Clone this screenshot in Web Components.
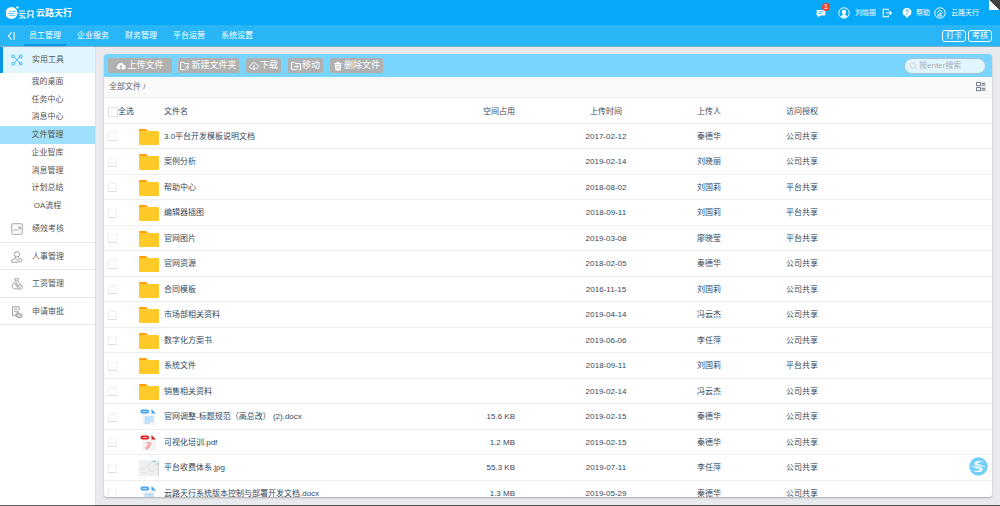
<!DOCTYPE html>
<html lang="zh-CN">
<head>
<meta charset="utf-8">
<title>文件管理</title>
<style>
html,body{margin:0;height:100%}
body{font:8px/12px "Liberation Sans","Noto Sans CJK SC",sans-serif;color:#34495e;background:#e9eaee;overflow:hidden}
</style>
</head>
<body>
<cloud-app></cloud-app>
<script>
const ICONS = {
  chat:'<path d="M2 3h12a1 1 0 0 1 1 1v7a1 1 0 0 1-1 1H7l-4 3v-3H2a1 1 0 0 1-1-1V4a1 1 0 0 1 1-1z" fill="currentColor" stroke="none"/><path d="M4 6h8M4 9h5" stroke="#05a9f7"/>',
  user:'<circle cx="8" cy="8" r="7"/><path d="M8 3.500c4 0 3 5 1.500 6v1l3 1.500c-2 3-7 3-9 0l3-1.500v-1C5 8.500 4 3.500 8 3.500z" fill="currentColor" stroke="none"/>',
  exit:'<path d="M10 4V2H2v12h8v-2M6 8h9M12 5l3 3-3 3" stroke-width="1.800"/>',
  help:'<path d="M8 0a6.500 6.500 0 0 1 3 12.500L8 16l-3-3.500A6.500 6.500 0 0 1 8 0z" fill="currentColor" stroke="none"/><path d="M6 5C6 2.500 10 2.500 10 5 10 6.500 8 6.500 8 8.500M8 9.500v1.500" stroke="#05a9f7" stroke-width="1.500"/>',
  corp:'<circle cx="8" cy="8" r="7"/><path d="M4 7.500L8 4l4 3.500M8 7v5M5.500 9v3M8 9h2.500M4.500 12h7"/>',
  fold:'<path d="M9 2L4 8l5 6M13 2v12" stroke-width="1.800"/>',
  tools:'<path d="M4 4l9 9M12 3L4 12"/><circle cx="13" cy="13" r="1.800"/><circle cx="3" cy="13" r="1.800"/><path d="M1 2l2-1 2 2-2 2-2-1zM11 2c0 3 1 4 4 3l-1-1 1-2-2-1z"/>',
  chart:'<rect x="1" y="1" width="14" height="14" rx="1"/><path d="M3 11l3-3 2 2 4-4M9 5.500h3.500V9"/>',
  person:'<circle cx="8" cy="4.500" r="3.500"/><path d="M6 8v2l-5 2v3h9M10 8v1.500M8 10v3"/><circle cx="12.500" cy="12.500" r="2.200"/>',
  money:'<path d="M5 1h5L9 4H6zM6 4C1 8 0 14.500 5 14.500h5M9 4c2 1 3 3 3.500 4M9 7H6v2h3v2H6"/><circle cx="12" cy="12" r="3"/><path d="M11 12h2"/>',
  approve:'<path d="M7 13H2V1h9v5M4 4h5M4 7h3"/><path d="M8 15l-2-4 2 .5V7h1.500v3l5 1v3l-1 1.500z" fill="currentColor" fill-opacity=".4"/>',
  upload:'<path d="M4 13C-1 12 1 7 3 7c1-6 9-5 9-1 5 1 4 7 1 7H9V9h2L8 6 5 9h2v4z" fill="currentColor" stroke="none"/>',
  newdir:'<path d="M9 14H1V2h5l1 2h7v3M9 10h6M12 7v7" stroke-width="1.500"/>',
  down:'<path d="M5 12C0 13 0 7 3 7c1-6 9-5 9-1 5 1 4 6-1 6M8 6v8M6 11l2 3 2-3" stroke-width="1.500"/>',
  move:'<path d="M9 14H1V2h5l1 2h8v10h-3M5 9h6M9 6l3 3-3 3" stroke-width="1.500"/>',
  trash:'<path d="M2 3h4V1h4v2h4v2H2zM3 6h10l-1 9H4z" fill="currentColor" stroke="none"/><path d="M6.500 8v5M9.500 8v5" stroke="#b0b0b0"/>',
  search:'<circle cx="7" cy="7" r="5.500"/><path d="M11 11l4 4"/>',
  list:'<rect x="1" y="1" width="6" height="5"/><rect x="1" y="9" width="6" height="5"/><path d="M9 2h6M9 5h6M9 10h6M9 13h6" stroke-width="1.500"/>',
  swirl:'<circle cx="16" cy="16" r="15.500" fill="#76cffb" stroke="none"/><path d="M25 9C17 4 8 8 9 12c1 3 12 2 15 3-5-4-11-2-10-4 2-3 7-3 11-2zM7 23c8 5 17 1 16-3-1-3-12-2-15-3 5 4 11 2 10 4-2 3-7 3-11 2z" fill="#fff" stroke="none"/><path d="M5 16h22" stroke="#fff"/>',
  folder:'<path d="M0 2q0-2 2-2h12l3 3v5H0z" fill="#ffa000" stroke="none"/><rect y="4" width="40" height="28" rx="2" fill="#ffca28" stroke="none"/>',
  doc:'<path d="M5 2h18l9 8v22H5z" fill="#f4f5f6" stroke="none"/><path d="M23 0l9 9h-9z" fill="#42a5f5" stroke="none"/><rect x="1" y="1" width="17" height="8" rx="4" fill="#42a5f5" stroke="none"/><path d="M5 5h9" stroke="#bbdefb" stroke-width="2"/><path d="M9 16h18M9 20h18M9 24h18M9 28h11" stroke="#90caf9" stroke-width="2"/>',
  pdf:'<path d="M5 2h18l9 8v22H5z" fill="#f4f4f4" stroke="none"/><path d="M23 0l9 9h-9z" fill="#e31b23" stroke="none"/><rect x="1" y="1" width="17" height="8" rx="4" fill="#e31b23" stroke="none"/><path d="M5 5h9" stroke="#ffb0b0" stroke-width="2"/><path d="M13 17c5-5 11-1 8 3-2 3-5 2-8 4-3 3 2 6 4 2l1-9" stroke="#ec5a60" stroke-width="1.500"/>',
  pic:'<path d="M0 0h40v32H0z" fill="#eef0ef" stroke="none"/><path d="M4 19l9-3 6-6 8-5M18 11l3 9 8 4M6 25h8" stroke="#cbd3d1"/><path d="M27 3h6M33 8h5" stroke="#69c8cf" stroke-width="2"/><path d="M39 3v29" stroke="#bbb"/>'
};
const VIEW_BOXES = {folder:'0 0 40 32',doc:'0 0 36 32',pdf:'0 0 36 32',pic:'0 0 40 32',swirl:'0 0 32 32'};
class UiIcon extends HTMLElement{
  connectedCallback(){
    if(this.shadowRoot) return;
    const n=this.getAttribute('name');
    this.attachShadow({mode:'open'}).innerHTML=`<style>:host{display:block;flex:none;width:10px;height:10px}svg{display:block;width:100%;height:100%;fill:none;stroke:currentColor;stroke-width:1.200}</style><svg viewBox="${VIEW_BOXES[n]||'0 0 16 16'}" aria-hidden="true">${ICONS[n]}</svg>`;
  }
}
customElements.define('ui-icon',UiIcon);

function define(name,html){
  const t=document.createElement('template');t.innerHTML=html;
  customElements.define(name,class extends HTMLElement{
    constructor(){super();this.attachShadow({mode:'open'}).append(t.content.cloneNode(true));}
  });
}

define('brand-logo',`<style>
:host{display:flex;align-items:center;color:#fff;font-size:9px;font-weight:bold}
svg{width:30px;height:14px;display:block}
</style><svg viewBox="0 0 30 14" aria-hidden="true"><circle cx="5.500" cy="7" r="6" fill="#fff"/><path d="M3 5.500h6.500M1.500 7.500h7M3 9.500h6.500" stroke="#53c3fa" stroke-width=".9"/><path d="M11.500 0v3M10 1.500h3" stroke="#fff" stroke-width=".8"/><path d="M13 5h6M12.500 7.500h7M13 12h3V9.500h-2.500M18 9.500V12h2M22 5h5v4h-5zM23 10l-2 2M26 10l2 2" stroke="#fff" stroke-width="1.200" fill="none"/></svg><span>云路天行</span>`);

define('top-bar',`<style>
:host{display:flex;justify-content:space-between;align-items:center;height:25px;padding:0 21px 0 6px;background:#05a9f7;color:#fff;font-size:7px;position:relative}
nav{display:flex;align-items:center}
a{display:flex;align-items:center;color:inherit;text-decoration:none;gap:5px;position:relative}
.round{width:12px;height:12px}
.msg{margin-right:12px}.out{margin:0 10px 0 6px}.help{margin-right:4px;gap:4px}
b{position:absolute;left:6px;top:-5px;width:8px;height:8px;border-radius:4px;background:#f44336;font:7px/8px "Liberation Sans",sans-serif;text-align:center}
.corner{position:absolute;right:0;top:0;width:11px;height:10px;background:linear-gradient(to top right,#fff 50%,#424242 50%)}
</style><brand-logo></brand-logo><nav>
<a class="msg" href="#" aria-label="消息"><ui-icon name="chat"></ui-icon><b>1</b></a>
<a href="#"><ui-icon class="round" name="user"></ui-icon>刘晓丽</a>
<a class="out" href="#" aria-label="退出"><ui-icon name="exit"></ui-icon></a>
<a class="help" href="#"><ui-icon name="help"></ui-icon>帮助</a>
<a href="#"><ui-icon class="round" name="corp"></ui-icon>云路天行</a></nav><i class="corner"></i>`);

define('nav-bar',`<style>
:host{display:flex;align-items:stretch;height:22px;box-sizing:border-box;padding:0 8px 0 6px;background:#29b6f6;color:#fff;border-bottom:1px solid #7fafcd}
.fold{border:0;background:none;color:inherit;padding:0;width:18px}
nav{display:flex;gap:6px;flex:1}
nav a{display:flex;align-items:center;box-sizing:border-box;padding:2px 5px 0;color:inherit;text-decoration:none;border-bottom:2px solid transparent}
nav a.on{border-color:#0396e6}
.acts{display:flex;gap:2px;align-items:center;padding-top:1px}
.acts button{font:inherit;line-height:10px;color:inherit;background:none;border:1px solid #fff;border-radius:3px;height:12px;width:24px;padding:0}
</style><button class="fold" aria-label="收起"><ui-icon name="fold"></ui-icon></button>
<nav><a class="on" href="#">员工管理</a><a href="#">企业服务</a><a href="#">财务管理</a><a href="#">平台运营</a><a href="#">系统设置</a></nav>
<div class="acts"><button>打卡</button><button>考核</button></div>`);

define('side-menu',`<style>
:host{display:block;width:95px;flex:none;background:#fff;box-shadow:0 0 1px #aaa;color:#555}
a{display:flex;align-items:center;color:inherit;text-decoration:none;box-sizing:border-box}
.head{height:26px;background:#e1f5fe;border-left:3px solid #0396e6;padding-left:8px;gap:9px}
.head ui-icon{color:#29b6f6}
ui-icon{width:12px;height:12px}
.sub{display:grid;grid-template-rows:repeat(8,1fr);height:142px}
.sub a{justify-content:center}.sub a.on{background:#9fe1fd}
.groups{display:grid;grid-template-rows:repeat(4,1fr);height:110px}
.groups a{padding:2px 0 0 11px;gap:9px;border-bottom:1px solid #e6e6e6}
.groups ui-icon{color:#999}
</style><a class="head" href="#"><ui-icon name="tools"></ui-icon>实用工具</a>
<nav class="sub"><a href="#">我的桌面</a><a href="#">任务中心</a><a href="#">消息中心</a><a class="on" href="#">文件管理</a><a href="#">企业智库</a><a href="#">消息管理</a><a href="#">计划总结</a><a href="#">OA流程</a></nav>
<nav class="groups"><a href="#"><ui-icon name="chart"></ui-icon>绩效考核</a><a href="#"><ui-icon name="person"></ui-icon>人事管理</a><a href="#"><ui-icon name="money"></ui-icon>工资管理</a><a href="#"><ui-icon name="approve"></ui-icon>申请审批</a></nav>`);

define('tool-button',`<style>
:host{display:block}
button{display:flex;align-items:center;justify-content:center;gap:1px;box-sizing:border-box;width:100%;height:15px;padding:0;border:0;border-radius:2px;background:#b0b0b0;color:#fff;font:9px/15px "Liberation Sans","Noto Sans CJK SC",sans-serif;white-space:nowrap}
</style><button><slot name="icon"></slot><slot></slot></button>`);

define('file-toolbar',`<style>
:host{display:flex;align-items:center;justify-content:space-between;height:23px;padding:0 6px 0 4px;background:#79d5fe}
div{display:grid;grid-template-columns:63px 61px 35px 35px 53px;column-gap:7px}
div tool-button:first-child{margin-right:-1px}
label{display:flex;align-items:center;gap:2px;box-sizing:border-box;width:82px;height:16px;padding:0 4px;border:1px solid #a7c4d2;border-radius:8px;background:#e1f5fe;color:#c8c8c8}
input{width:100%;min-width:0;border:0;padding:0;background:none;outline:0;font:inherit;color:#555}
input::placeholder{color:#a5b0b5;opacity:1}
label ui-icon{width:8px;height:8px}
</style><div>
<tool-button><ui-icon slot="icon" name="upload"></ui-icon>上传文件</tool-button>
<tool-button><ui-icon slot="icon" name="newdir"></ui-icon>新建文件夹</tool-button>
<tool-button><ui-icon slot="icon" name="down"></ui-icon>下载</tool-button>
<tool-button><ui-icon slot="icon" name="move"></ui-icon>移动</tool-button>
<tool-button><ui-icon slot="icon" name="trash"></ui-icon>删除文件</tool-button></div>
<label><ui-icon name="search"></ui-icon><input type="text" aria-label="搜索" placeholder="按enter搜索"></label>`);

define('path-bar',`<style>
:host{display:flex;align-items:center;justify-content:space-between;box-sizing:border-box;height:21px;padding:0 6px 0 5px;background:#f9f9f9;border-bottom:1px solid #eee;color:#666}
a{color:inherit;text-decoration:none}
button{border:0;background:none;padding:0;color:#4a5a68}
</style><span><a href="#">全部文件</a> /</span><button aria-label="切换视图"><ui-icon name="list"></ui-icon></button>`);

const FILES=[
['folder','3.0平台开发模板说明文档','','2017-02-12','秦德华','公司共享'],
['folder','案例分析','','2019-02-14','刘晓丽','公司共享'],
['folder','帮助中心','','2018-08-02','刘国莉','平台共享'],
['folder','编辑器插图','','2018-09-11','刘国莉','平台共享'],
['folder','官网图片','','2019-03-08','廖晓莹','平台共享'],
['folder','官网资源','','2018-02-05','秦德华','公司共享'],
['folder','合同模板','','2016-11-15','刘国莉','公司共享'],
['folder','市场部相关资料','','2019-04-14','冯云杰','公司共享'],
['folder','数字化方案书','','2019-06-06','李任萍','公司共享'],
['folder','系统文件','','2018-09-11','刘国莉','平台共享'],
['folder','销售相关资料','','2019-02-14','冯云杰','公司共享'],
['doc','官网调整-标题规范（高总改） (2).docx','15.6 KB','2019-02-15','秦德华','公司共享'],
['pdf','可视化培训.pdf','1.2 MB','2019-02-15','秦德华','公司共享'],
['pic','平台收费体系.jpg','55.3 KB','2019-07-11','李任萍','公司共享'],
['doc','云路天行系统版本控制与部署开发文档.docx','1.3 MB','2019-05-29','秦德华','公司共享']];
define('file-table',`<style>
:host{display:block}
table{width:100%;table-layout:fixed;border-collapse:separate;border-spacing:0}
th,td{padding:1px 0 0;font-weight:normal;text-align:left;border-bottom:1px solid #eee;white-space:nowrap;box-sizing:border-box;height:25px}
th{height:26px;padding-top:3px}
tbody tr:nth-child(even) td{height:26px}
.c{width:35px}.i{width:25px}.s{width:60px}.t{width:182px}.u{width:89px}.a{width:206px}
.size{text-align:right}
.time{text-align:center}
label{display:flex;align-items:center;padding-left:4px}
input{appearance:none;flex:none;display:block;box-sizing:border-box;width:10px;height:10px;margin:0;border:1px solid #e2e2e2;background:#fff}
td input{margin-left:4px;width:9px;height:9px;border-color:#f1f1f1 #f1f1f1 #ddd #eee}
td ui-icon{width:20px;height:16px}
</style><table><colgroup><col class="c"><col class="i"><col><col class="s"><col class="t"><col class="u"><col class="a"></colgroup>
<thead><tr><th colspan="2"><label><input type="checkbox">全选</label></th><th>文件名</th><th class="size">空间占用</th><th class="time">上传时间</th><th>上传人</th><th>访问授权</th></tr></thead>
<tbody>${FILES.map(([icon,name,size,time,user,access])=>`<tr><td><input type="checkbox" aria-label="${name}"></td><td><ui-icon name="${icon}"></ui-icon></td><td>${name}</td><td class="size">${size}</td><td class="time">${time}</td><td>${user}</td><td>${access}</td></tr>`).join('')}</tbody></table>`);

define('file-panel',`<style>
:host{display:block;flex:1;min-width:0;overflow:hidden;background:#fff;border-radius:3px;box-shadow:0 1px 2px #aaa}
</style><file-toolbar></file-toolbar><path-bar></path-bar><file-table></file-table>`);

define('cloud-app',`<style>
:host{display:flex;flex-direction:column;height:100vh;box-sizing:border-box;border-bottom:1px solid #555;position:relative}
top-bar,nav-bar{flex:none}
main{display:flex;flex:1;min-height:0}
.content{display:flex;flex:1;min-width:0;padding:7px 8px 8px 9px}
.float{position:absolute;right:12px;bottom:29px;border:0;padding:0;background:none}
.float ui-icon{width:19px;height:19px}
</style><top-bar></top-bar><nav-bar></nav-bar><main><side-menu></side-menu><div class="content"><file-panel></file-panel></div></main><button class="float" aria-label="客服"><ui-icon name="swirl"></ui-icon></button>`);
</script>
</body>
</html>
